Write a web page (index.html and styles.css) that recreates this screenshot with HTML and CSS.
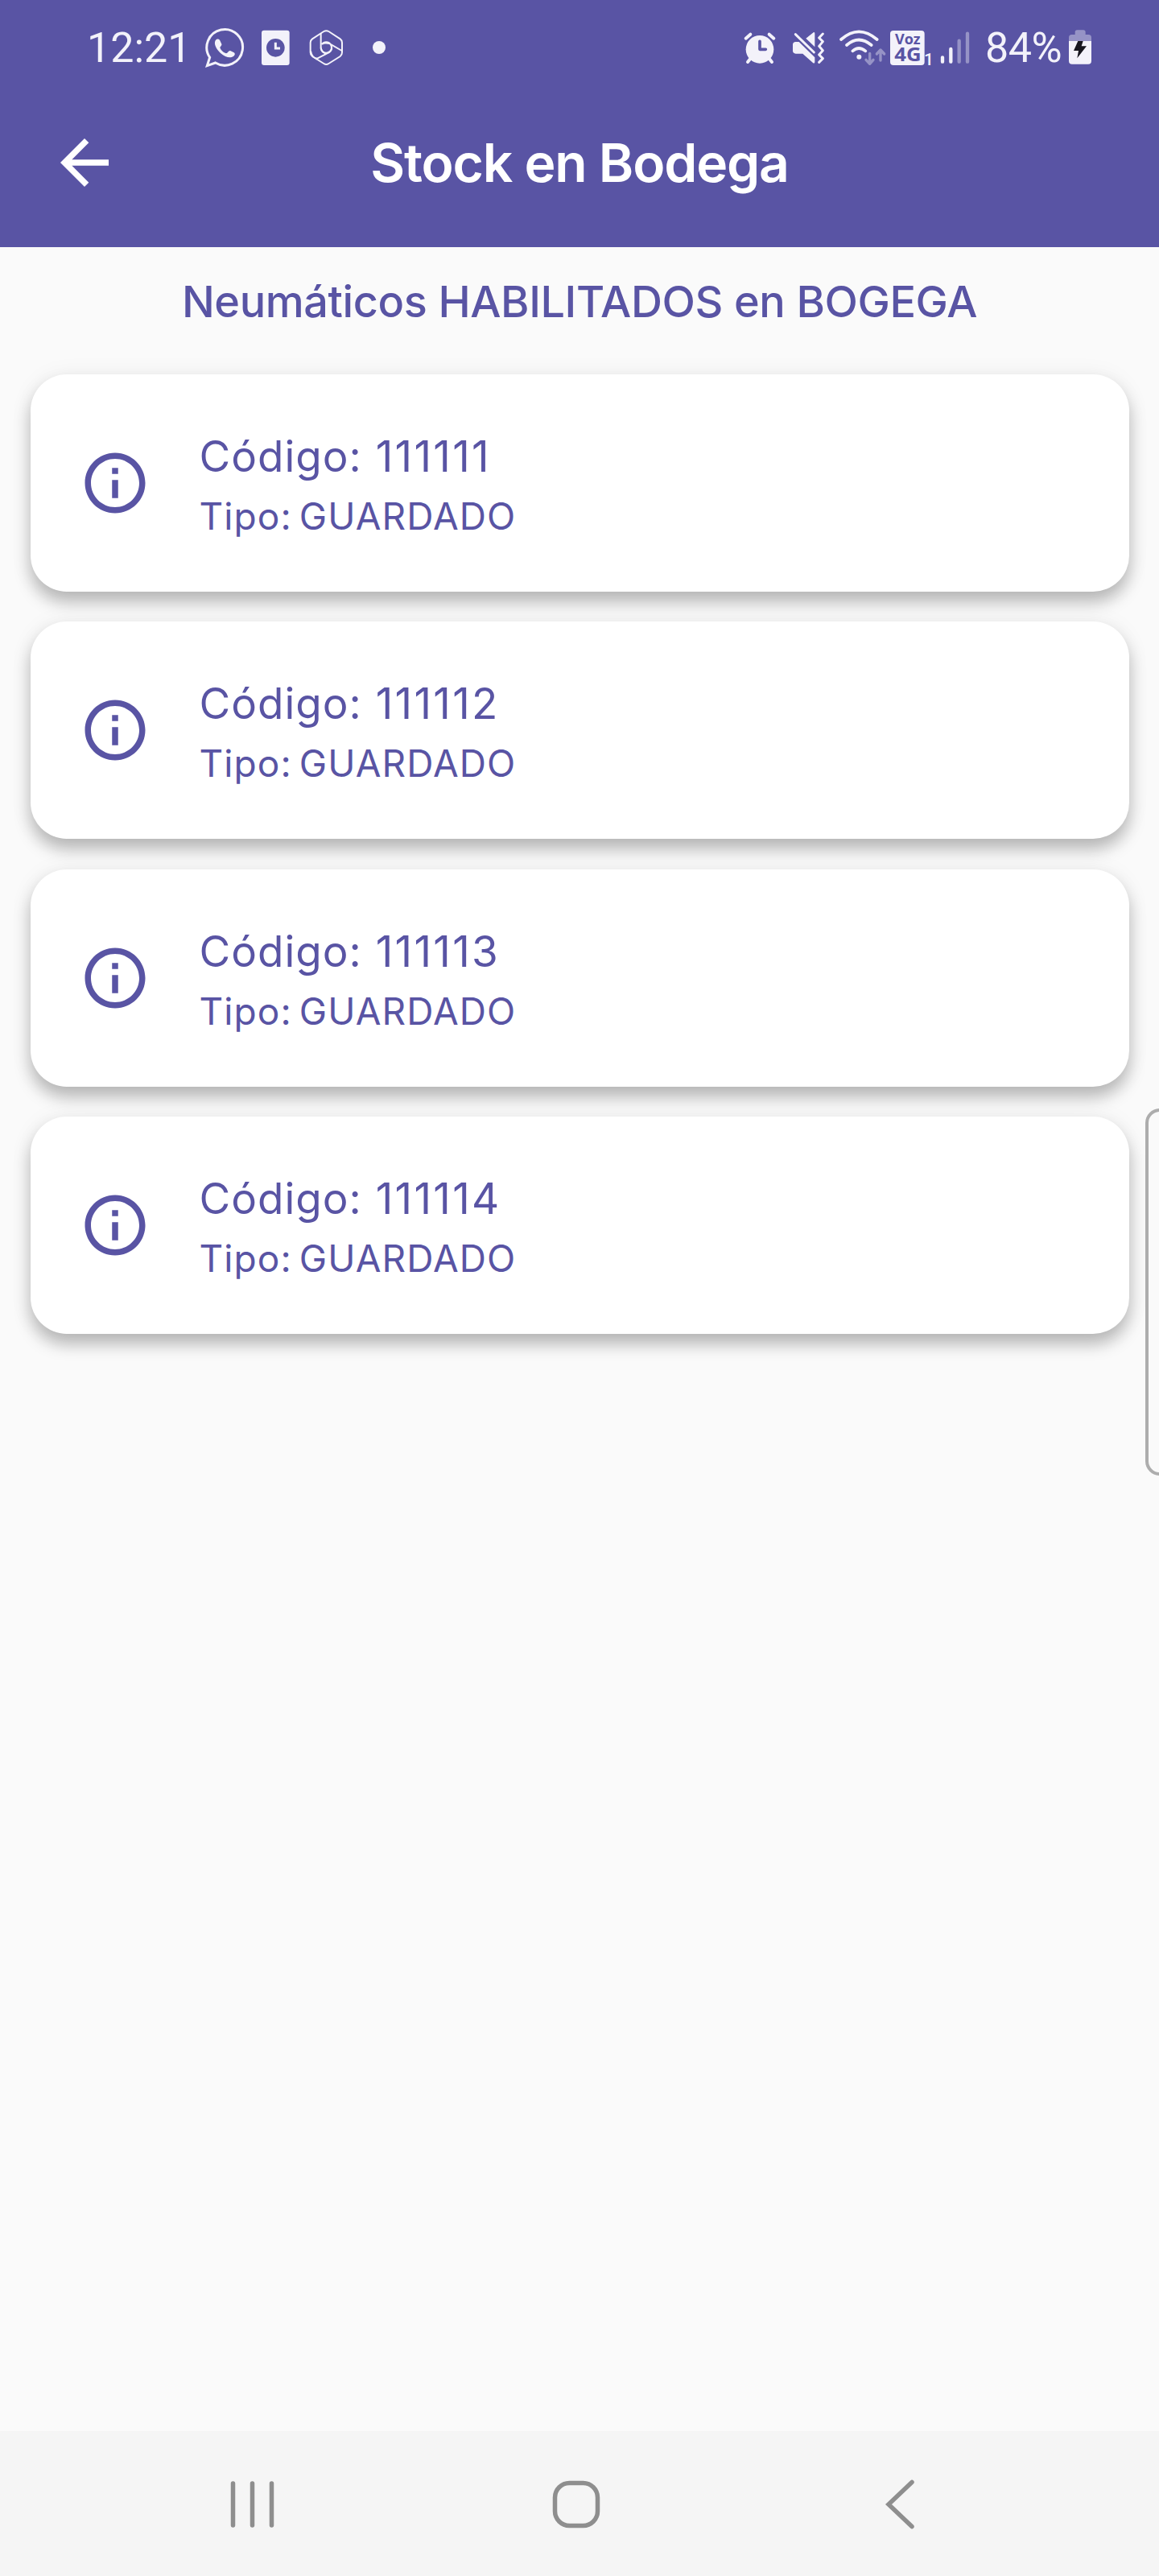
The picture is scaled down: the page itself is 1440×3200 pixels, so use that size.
FILE: index.html
```html
<!DOCTYPE html>
<html lang="es">
<head>
<meta charset="utf-8">
<title>Stock en Bodega</title>
<link rel="stylesheet" href="styles.css">
</head>
<body>
<svg class="defs" width="0" height="0" aria-hidden="true">
  <symbol id="info" viewBox="0 0 24 24"><path d="M11 7h2v2h-2zm0 4h2v6h-2zm1-9C6.480 2 2 6.480 2 12s4.480 10 10 10 10-4.480 10-10S17.520 2 12 2zm0 18c-4.410 0-8-3.590-8-8s3.590-8 8-8 8 3.590 8 8-3.590 8-8 8z"/></symbol>
</svg>
<div class="screen">
  <header class="header">
    <div class="status">
      <div class="status-side status-left">
        <span class="time">12:21</span>
        <svg class="whatsapp" viewBox="480 60 180 180">
          <path class="line" stroke-width="9" stroke-linejoin="miter" d="M502 215L512 184A67 67 0 1 1 533 204Z"/>
          <path class="fill" d="M533 121C537 114 545 114 549 119L556 134C558 139 550 144 550 148C553 157 563 166 573 169C579 168 582 158 588 159L602 166C608 170 605 177 600 180C588 188 569 183 552 168C536 153 526 134 533 121Z"/>
        </svg>
        <svg class="clock-card" viewBox="690 60 135 180">
          <rect class="fill" x="705" y="83" width="104" height="130" rx="9"/>
          <circle class="cut" cx="757" cy="148" r="34"/>
          <path class="line" stroke-width="9" d="M757 128V150H774"/>
        </svg>
        <svg class="hex" viewBox="870 60 150 180">
          <g class="line" stroke-width="6">
            <path d="M937 87Q946 82 955 87L998 115Q1005 120 1005 129V165Q1005 175 998 180L955 207Q946 213 937 207L894 180Q887 175 887 165V129Q887 120 894 115Z"/>
            <path d="M926 93V148A20 20 0 1 0 930 135Q938 128 957 132L1004 159"/>
            <path d="M967 148Q966 162 949 169L907 191M888 160Q893 188 914 188M926 148Q928 164 945 170"/>
          </g>
        </svg>
        <svg class="dot" viewBox="1110 60 66 180"><circle class="fill" cx="1143" cy="147" r="24"/></svg>
      </div>
      <div class="status-side">
        <svg class="alarm" viewBox="60 60 150 180">
          <circle class="fill" cx="132" cy="154" r="52"/>
          <path class="line round" stroke-width="12" d="M80 113L97 98M167 98L184 113M96 190L87 201M168 190L177 201"/>
          <path class="cutline" stroke-width="11" d="M132 124V154H154"/>
        </svg>
        <svg class="mute" viewBox="240 60 150 180">
          <path class="fill" d="M304 113L332 91Q337 88 337 95V145ZM266 126H278L337 184V200Q337 209 330 204L292 170H266Q255 169 255 160V136Q255 127 266 126Z"/>
          <path class="line round" stroke-width="9" d="M265 98L334 165"/>
          <path class="line round" stroke-width="9" stroke-linejoin="round" d="M367 96L353 111L367 125L353 142L367 158L353 174L367 188L353 202"/>
        </svg>
        <svg class="wifi" viewBox="420 60 195 180">
          <path class="line round" stroke-width="11" d="M435 117Q501 59 569 117M456 138Q501 99 548 138M478 160Q501 140 526 160"/>
          <circle class="fill" cx="502" cy="182" r="9"/>
          <path class="line round faint" stroke-width="10" stroke-linejoin="round" d="M542 169V207M528 193L542 208L555 193M582 195V157M568 171L582 156L596 171"/>
        </svg>
        <svg class="volte" viewBox="615 60 165 180">
          <rect class="fill" x="618" y="84" width="128" height="129" rx="12"/>
          <text class="badge-text" x="636" y="136" font-size="55" textLength="95" lengthAdjust="spacingAndGlyphs">Voz</text>
          <text class="badge-text" x="634" y="199" font-size="69" textLength="100" lengthAdjust="spacingAndGlyphs">4G</text>
          <text class="sim-text" x="744" y="212" font-size="63">1</text>
        </svg>
        <svg class="signal" viewBox="795 60 135 180">
          <path class="line round" stroke-width="13" d="M813 184V200M844 153V200"/>
          <path class="line round faint" stroke-width="13" d="M875 122V200M906 95V200"/>
        </svg>
        <span class="percent">84%</span>
        <svg class="battery" viewBox="1275 60 105 180">
          <path class="fill faint" d="M1284 123V110Q1284 99 1295 99H1307V90Q1307 82 1315 82H1338Q1346 82 1346 90V99H1357Q1368 99 1368 110V123Z"/>
          <path class="fill" d="M1284 123H1368V197Q1368 209 1356 209H1296Q1284 209 1284 197Z"/>
          <path class="bolt" d="M1318 123H1337L1331 142H1350L1315 187L1320 159H1302Z"/>
        </svg>
      </div>
    </div>
    <div class="appbar">
      <svg class="back" viewBox="0 0 24 24"><path d="M20 11H7.830l5.590-5.590L12 4l-8 8 8 8 1.410-1.410L7.830 13H20v-2z"/></svg>
      <h1 class="title">Stock en Bodega</h1>
    </div>
  </header>
  <main class="content">
    <h2 class="subtitle">Neumáticos HABILITADOS en BOGEGA</h2>
    <div class="list">
      <article class="card"><svg class="info"><use href="#info"/></svg><div class="card-text"><p class="code">Código: <span class="number">111111</span></p><p class="type">Tipo: GUARDADO</p></div></article>
      <article class="card"><svg class="info"><use href="#info"/></svg><div class="card-text"><p class="code">Código: <span class="number">111112</span></p><p class="type">Tipo: GUARDADO</p></div></article>
      <article class="card"><svg class="info"><use href="#info"/></svg><div class="card-text"><p class="code">Código: <span class="number">111113</span></p><p class="type">Tipo: GUARDADO</p></div></article>
      <article class="card"><svg class="info"><use href="#info"/></svg><div class="card-text"><p class="code">Código: <span class="number">111114</span></p><p class="type">Tipo: GUARDADO</p></div></article>
    </div>
  </main>
  <nav class="navbar">
    <svg viewBox="0 0 70 70"><path d="M11.500 9V61M35.500 9V61M59.500 9V61"/></svg>
    <svg viewBox="0 0 70 70"><rect x="8.500" y="8.500" width="53" height="53" rx="18"/></svg>
    <svg viewBox="0 0 70 70"><path d="M50 7.500L21 35L50 62.500"/></svg>
  </nav>
  <div class="edge-handle"></div>
</div>
</body>
</html>
```
FILE: styles.css
```css
* { box-sizing: border-box; margin: 0; padding: 0; }

body {
  background: #fafafa;
  font-family: Inter, "Noto Sans", sans-serif;
}

.defs { position: absolute; }
svg { display: block; flex: none; }

.screen {
  position: relative;
  display: flex;
  flex-direction: column;
  width: 1440px;
  height: 3200px;
  overflow: hidden;
}

/* Status bar */
.header { height: 307px; background: #5954a4; }
.status {
  display: flex;
  justify-content: space-between;
  height: 120px;
  padding: 30px 80px 0 108px;
}
.status-side { display: flex; height: 60px; }
.status-side svg { height: 60px; }
.time, .percent {
  color: #f3f2fa;
  font: 400 52px/60px Roboto, sans-serif;
  white-space: nowrap;
}
.time { width: 142px; letter-spacing: 0; }
.percent { width: 101px; margin-left: 14px; letter-spacing: -0.5px; }
.whatsapp { width: 60px; }
.clock-card { width: 45px; margin-left: 10px; }
.hex { width: 50px; margin-left: 15px; }
.dot { width: 22px; margin-left: 30px; }
.alarm { width: 50px; }
.mute { width: 50px; margin-left: 10px; }
.wifi { width: 65px; margin-left: 10px; }
.volte { width: 55px; }
.signal { width: 45px; margin-left: 5px; }
.battery { width: 35px; }

.fill { fill: #f3f2fa; }
.line { fill: none; stroke: #f3f2fa; }
.round { stroke-linecap: round; }
.faint { opacity: 0.4; }
.cut { fill: #5954a4; }
.cutline { fill: none; stroke: #5954a4; stroke-linecap: round; stroke-linejoin: round; }
.bolt { fill: #17161f; }
.badge-text { fill: #5954a4; font-family: "Open Sans", sans-serif; font-weight: 700; }
.sim-text { fill: #f3f2fa; font-family: Roboto, sans-serif; font-weight: 500; }

/* App bar */
.appbar {
  display: grid;
  grid-template-columns: 90px 1fr 90px;
  align-items: center;
  height: 164px;
  padding: 0 60px;
}
.back { width: 90px; height: 90px; fill: #fff; }
.title {
  color: #fff;
  font-size: 66px;
  font-weight: 630;
  letter-spacing: -1.2px;
  line-height: 90px;
  text-align: center;
}

/* Stock list */
.content { flex: 1; padding: 32.500px 37.500px 0; }
.subtitle {
  height: 125px;
  color: #5954a4;
  font-size: 54px;
  font-weight: 550;
  letter-spacing: -0.4px;
  line-height: 70px;
  text-align: center;
  white-space: nowrap;
}
.list { display: flex; flex-direction: column; gap: 37.500px; }
.card {
  display: flex;
  align-items: center;
  gap: 60px;
  height: 270px;
  padding: 0 60px;
  border-radius: 45px;
  background: #fff;
  box-shadow: 0 13px 20px rgba(0, 0, 0, 0.25), 0 2px 30px rgba(0, 0, 0, 0.06);
}
.info { width: 90px; height: 90px; fill: #5954a4; }
.card-text { padding-top: 4px; }
.code, .type { color: #5954a4; white-space: nowrap; }
.code { font-size: 53px; letter-spacing: 1px; line-height: 78px; }
.number { margin-left: 1px; letter-spacing: 2.300px; }
.type { font-size: 46px; letter-spacing: 1.100px; word-spacing: -5px; line-height: 70px; }

/* System navigation */
.navbar {
  display: flex;
  justify-content: space-between;
  height: 180px;
  padding: 56px 287px 0 278px;
  background: #f5f5f5;
}
.navbar svg {
  width: 70px;
  height: 70px;
  fill: none;
  stroke: #8e8e8e;
  stroke-width: 5.500;
  stroke-linecap: round;
}

.edge-handle {
  position: absolute;
  top: 1377px;
  right: -20px;
  width: 37px;
  height: 456px;
  border: 4px solid #adadad;
  border-radius: 18px;
}
```
